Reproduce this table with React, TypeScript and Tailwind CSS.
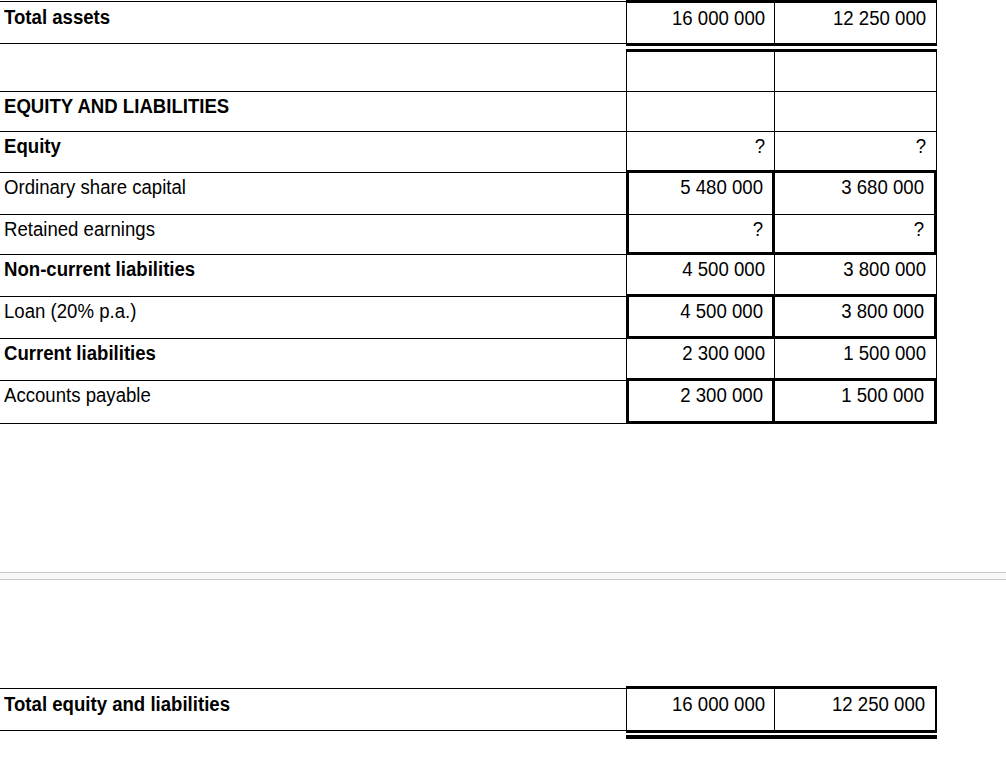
import React from 'react';

type RowKind = 'plain' | 'thickBottom' | 'boxMid' | 'boxEnd';

interface SheetRow {
    label: string;
    bold?: boolean;
    a?: string;
    b?: string;
    kind: RowKind;
    height: string;
}

const rows: SheetRow[] = [
    { label: 'EQUITY AND LIABILITIES', bold: true, kind: 'plain', height: 'h-[40px]' },
    { label: 'Equity', bold: true, a: '?', b: '?', kind: 'thickBottom', height: 'h-[41px]' },
    { label: 'Ordinary share capital', a: '5 480 000', b: '3 680 000', kind: 'boxMid', height: 'h-[42px]' },
    { label: 'Retained earnings', a: '?', b: '?', kind: 'boxEnd', height: 'h-[40px]' },
    { label: 'Non-current liabilities', bold: true, a: '4 500 000', b: '3 800 000', kind: 'thickBottom', height: 'h-[42px]' },
    { label: 'Loan (20% p.a.)', a: '4 500 000', b: '3 800 000', kind: 'boxEnd', height: 'h-[42px]' },
    { label: 'Current liabilities', bold: true, a: '2 300 000', b: '1 500 000', kind: 'thickBottom', height: 'h-[42px]' },
    { label: 'Accounts payable', a: '2 300 000', b: '1 500 000', kind: 'boxEnd', height: 'h-[43px]' },
];

const firstCol: Record<RowKind, string> = {
    plain: 'border-l border-r border-b',
    thickBottom: 'border-l border-r border-b-[3px]',
    boxMid: 'border-l-[3px] border-r-[3px] border-b',
    boxEnd: 'border-l-[3px] border-r-[3px] border-b-[3px]',
};

const secondCol: Record<RowKind, string> = {
    plain: 'border-r border-b',
    thickBottom: 'border-r border-b-[3px]',
    boxMid: 'border-r-[3px] border-b',
    boxEnd: 'border-r-[3px] border-b-[3px]',
};

const Label: React.FC<{ text: string; bold?: boolean }> = ({ text, bold }) => (
    <span className={`inline-block origin-left scale-x-[0.93] whitespace-nowrap ${bold ? 'font-bold' : 'font-normal'}`}>
        {text}
    </span>
);

const Amount: React.FC<{ value?: string }> = ({ value }) => (
    <span className="inline-block origin-right scale-x-[0.93] whitespace-nowrap">{value}</span>
);

const App: React.FC = () => {
    return (
        <div className="w-[1006px] h-[762px] bg-white text-black font-['Liberation_Sans',Arial,sans-serif] text-[20px] leading-[24px] overflow-hidden">

            {/** Top table */}
            <div className="grid grid-cols-[626px_149px_162px] w-[937px]">
                {/* Total assets */}
                <div className="mt-px h-[43px] self-start border-y border-black pl-1 pt-[3px]">
                    <Label text="Total assets" bold />
                </div>
                <div className="h-[46px] border-t-[3px] border-b-[3px] border-l border-r border-black pt-[3px] pr-[9px] text-right">
                    <Amount value="16 000 000" />
                </div>
                <div className="h-[46px] border-t-[3px] border-b-[3px] border-r border-black pt-[3px] pr-[10px] text-right">
                    <Amount value="12 250 000" />
                </div>

                {/* Empty row under double line */}
                <div className="h-[46px] border-b border-black" />
                <div className="mt-[3px] border-t-[3px] border-b border-l border-r border-black" />
                <div className="mt-[3px] border-t-[3px] border-b border-r border-black" />

                {rows.map((row) => (
                    <React.Fragment key={row.label}>
                        <div className={`${row.height} border-b border-black pl-1 pt-[2px]`}>
                            <Label text={row.label} bold={row.bold} />
                        </div>
                        <div className={`${firstCol[row.kind]} border-black pt-[2px] pr-[9px] text-right`}>
                            <Amount value={row.a} />
                        </div>
                        <div className={`${secondCol[row.kind]} border-black pt-[2px] pr-[10px] text-right`}>
                            <Amount value={row.b} />
                        </div>
                    </React.Fragment>
                ))}
            </div>

            {/** Page break bar */}
            <div className="mt-[148px] h-[8px] w-full border-y border-[#c8c8c8] bg-[#f7f7f7]" />

            {/** Bottom table */}
            <div className="mt-[106px] grid grid-cols-[626px_149px_162px] w-[937px]">
                <div className="mt-[2px] h-[43px] self-start border-y border-black pl-1 pt-[3px]">
                    <Label text="Total equity and liabilities" bold />
                </div>
                <div className="h-[47px] border-t-[3px] border-b-[3px] border-l border-r border-black pt-[3px] pr-[9px] text-right">
                    <Amount value="16 000 000" />
                </div>
                <div className="h-[47px] border-t-[3px] border-b-[3px] border-r-2 border-black pt-[3px] pr-[10px] text-right">
                    <Amount value="12 250 000" />
                </div>

                <div />
                <div className="col-span-2 mt-[2px] h-[4px] bg-black" />
            </div>
        </div>
    );
};

export default App;
